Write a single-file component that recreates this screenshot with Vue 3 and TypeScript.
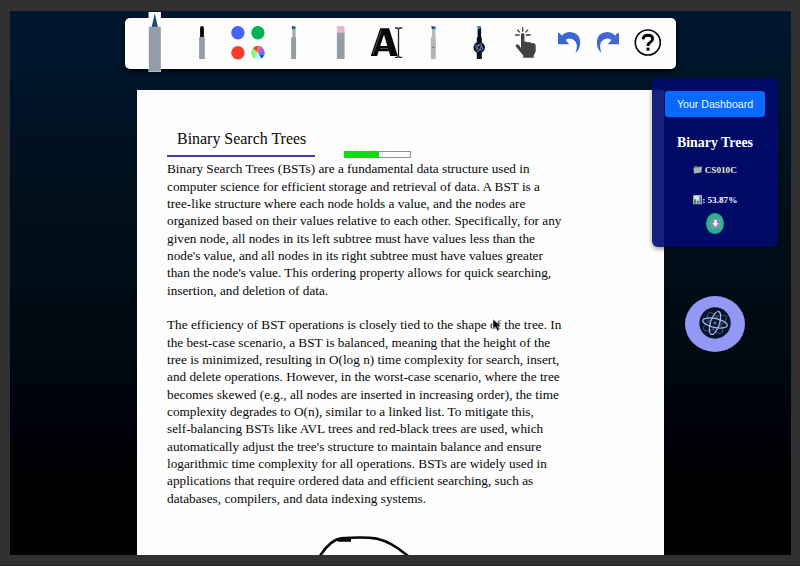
<script setup lang="ts">
const intro: string[] = [
  'Binary Search Trees (BSTs) are a fundamental data structure used in',
  'computer science for efficient storage and retrieval of data. A BST is a',
  'tree-like structure where each node holds a value, and the nodes are',
  'organized based on their values relative to each other. Specifically, for any',
  'given node, all nodes in its left subtree must have values less than the',
  "node's value, and all nodes in its right subtree must have values greater",
  "than the node's value. This ordering property allows for quick searching,",
  'insertion, and deletion of data.',
]
const details: string[] = [
  'The efficiency of BST operations is closely tied to the shape of the tree. In',
  'the best-case scenario, a BST is balanced, meaning that the height of the',
  'tree is minimized, resulting in O(log n) time complexity for search, insert,',
  'and delete operations. However, in the worst-case scenario, where the tree',
  'becomes skewed (e.g., all nodes are inserted in increasing order), the time',
  'complexity degrades to O(n), similar to a linked list. To mitigate this,',
  'self-balancing BSTs like AVL trees and red-black trees are used, which',
  "automatically adjust the tree's structure to maintain balance and ensure",
  'logarithmic time complexity for all operations. BSTs are widely used in',
  'applications that require ordered data and efficient searching, such as',
  'databases, compilers, and data indexing systems.',
]
const progress: number = 53.87
</script>

<template>
  <div class="window">
    <main class="desk">
      <header class="toolbar">
        <svg class="tool" viewBox="0 0 46.4 51">
          <path d="M16.6 -6h12.3v60H16.6z" fill="#fff" />
          <path d="M22.8 -4.8l3.2 14h-6.4z" fill="#204a78" />
          <path d="M16.8 8.7h12v45h-12z" fill="#949ca7" />
        </svg>
        <svg class="tool" viewBox="0 0 46.4 51">
          <path d="M21.1 19V10q0-2 1.9-2t1.9 2v9z" fill="#050505" />
          <path d="M20.1 19h5.7v22h-5.7z" fill="#949ca7" />
        </svg>
        <svg class="tool" viewBox="0 0 46.4 51">
          <circle cx="12.9" cy="14.7" r="6.7" fill="#4865fa" />
          <circle cx="32.9" cy="14.7" r="6.7" fill="#04b154" />
          <circle cx="12.9" cy="34.7" r="6.7" fill="#fc3b2b" />
          <g transform="translate(32.9 34.7)">
            <circle r="6.7" fill="#8bed73" />
            <path d="M0 0L-4.7-4.7A6.7 6.7 0 0 1 2.6-6.2z" fill="#f04722" />
            <path d="M0 0L2.6-6.2A6.7 6.7 0 0 1 6.7 0z" fill="#bd54e8" />
            <path d="M0 0H6.7A6.7 6.7 0 0 1 3.3 5.8z" fill="#244fe0" />
            <path d="M0 0L3.3 5.8A6.7 6.7 0 0 1-3.3 5.8z" fill="#c9fbf6" />
            <path d="M-6 -1L6 2M-3 5L1-6" stroke="#eee" stroke-width=".5" />
          </g>
        </svg>
        <svg class="tool" viewBox="0 0 46.4 51">
          <path d="M20.5 8l4 .6v2.4l-3 .9z" fill="#24598e" />
          <path d="M21.3 11.5l3.4-1V20h-3.4z" fill="#a4acb4" />
          <path d="M20.1 19.5h5V41h-5z" fill="#949ca7" />
        </svg>
        <svg class="tool" viewBox="0 0 46.4 51">
          <path d="M18.9 8h7.7v7h-7.7z" fill="#edbcc5" />
          <path d="M20 10l4 3M24 9l2 5" stroke="#cc9de4" stroke-width=".8" />
          <path d="M18.9 14.7h7.7V41h-7.7z" fill="#949ca7" />
        </svg>
        <svg class="tool" viewBox="0 0 46.4 51">
          <path fill-rule="evenodd" d="M6.7 38L16.2 10.3h8.9L33.8 38H26.3l-1.4-4.8H14.6L13.2 38zM16.2 28h7.1l-3.3-11.3z" fill="#080808" />
          <path d="M9.2 36l8-23.5M24 30.6h-8" stroke="#5a5a5a" stroke-width=".9" fill="none" />
          <path d="M30.9 10h2.2l1.3.8 1.3-.8h2.6M34.5 10.5v28M30.9 39.4h2.2l1.3-.8 1.3.8h2.6" stroke="#222" stroke-width="1.3" fill="none" />
        </svg>
        <svg class="tool" viewBox="0 0 46.4 51">
          <path d="M20.1 8l4.5.6v2.7l-3.3.9z" fill="#255e96" />
          <path d="M20.9 11.6l3.5-1V20h-3.5z" fill="#b7b8b8" />
          <path d="M19.8 19.5h5V41h-5z" fill="#b5b5b5" />
          <circle cx="22.4" cy="29.5" r=".8" fill="#555" />
        </svg>
        <svg class="tool" viewBox="0 0 46.4 51">
          <path d="M20.1 8l4 .6v3l-3.2.5z" fill="#2875ad" />
          <path d="M20.6 11.6l3.5-1v9h.7V41h-5V19.5h.8z" fill="#07101b" />
          <circle cx="22.2" cy="29.5" r="5.7" fill="#07162b" />
          <g fill="none" stroke="#a4bddb" stroke-width=".55">
            <ellipse cx="22.2" cy="29.5" rx="4.2" ry="1.7" transform="rotate(25 22.2 29.5)" />
            <ellipse cx="22.2" cy="29.5" rx="4.2" ry="1.7" transform="rotate(115 22.2 29.5)" />
          </g>
        </svg>
        <svg class="tool" viewBox="0 0 46.4 51">
          <path d="M18 30.5V16.7q0-1.7 1.7-1.7t1.7 1.7v7.1q2.3-1 3.5.6 2.3-.9 3.5.8 4.1-.6 4.3 2.6V33.5l-2 4V39.7H20.2V37.5l-7.2-8.8q-1-1.8.6-2.3 2.3-.6 4.4 4.1z" fill="#424242" />
          <path d="M19.7 9.2v4.5M14.3 11.8l2.6 2.6M25.1 11.8l-2.6 2.6M12 17h4.7M22.7 17h5" stroke="#424242" stroke-width="1.3" />
        </svg>
        <svg class="tool tool--undo" viewBox="0 0 38.5 51">
          <path d="M8 15.3l1.5-.2 2.5 2.6Q15 14.1 20 14.1 30.3 15 30.2 24.5 29.8 31.5 25.5 35 28.5 27 25.3 23.3 21 18.5 15.6 22l3.6 4.2H8z" fill="#3866d3" />
        </svg>
        <svg class="tool tool--redo" viewBox="0 0 41 51">
          <path d="M31 15.3l-1.5-.2-2.5 2.6Q24 14.1 19 14.1 8.7 15 8.8 24.5 9.2 31.5 13.5 35 10.5 27 13.7 23.3 18 18.5 23.4 22l-3.6 4.2H31z" fill="#4267d6" />
        </svg>
        <svg class="tool tool--help" viewBox="0 0 38.5 51">
          <circle cx="18.8" cy="24.5" r="12.5" fill="none" stroke="#050505" stroke-width="1.6" />
          <path d="M14.1 21.4q.1-4.2 4.8-4.2 4.7 0 4.7 3.6 0 2-2.3 3.4-2.3 1.3-2.3 3.8" fill="none" stroke="#050505" stroke-width="2.9" />
          <path d="M17.5 29.6h3v3h-3z" fill="#050505" />
        </svg>
      </header>

      <article class="page">
        <div class="heading-row">
          <h1>Binary Search Trees</h1>
          <div class="meter"><div class="fill" :style="{ width: progress + '%' }"></div><i class="thumb"></i></div>
        </div>
        <p><span v-for="line in intro" :key="line">{{ line }}</span></p>
        <p><span v-for="line in details" :key="line">{{ line }}</span></p>
        <svg class="sketch" viewBox="0 0 100 20">
          <path d="M4 20Q14 3.8 25 2.3Q48 .5 61 2.7Q75 5.5 92 20M22 4.4h13" fill="none" stroke="#050505" stroke-width="2.7" />
        </svg>
      </article>

      <aside class="card">
        <button type="button">Your Dashboard</button>
        <h2>Binary Trees</h2>
        <div class="course">
          <svg viewBox="0 0 10 10">
            <path d="M.8 1.5l3-.5 1 1 4.5-.5v6L1.5 9z" fill="#68717a" />
            <path d="M.5 3.2l8.8-1.4-1 6.1L1 9z" fill="#a9b0b2" />
          </svg>
          <span>CS010C</span>
        </div>
        <div class="score">
          <svg viewBox="0 0 10 10">
            <path d="M.3.3h9.2v9.4H.3z" fill="#d9e4e9" />
            <path d="M1 4.6h2.3v4.7H1z" fill="#16a259" />
            <path d="M4 6h2v3.3H4z" fill="#df3544" />
            <path d="M6.7 1.5h2.2v7.8H6.7z" fill="#287dbf" />
          </svg>
          <span>: {{ progress }}%</span>
        </div>
        <div class="download">
          <svg viewBox="0 0 11 11">
            <rect x=".2" y=".2" width="10.6" height="10.6" rx="1" fill="#7795ab" />
            <path d="M4.3 2h2.4v3.2h2L5.5 8.7 2.3 5.2h2z" fill="#fff" />
          </svg>
        </div>
      </aside>

      <div class="assistant">
        <svg viewBox="0 0 32 32">
          <circle cx="16" cy="16" r="15.7" fill="#061329" />
          <g fill="none" stroke="#40536f" stroke-width="1">
            <ellipse cx="16" cy="16" rx="13" ry="5" transform="rotate(-30 16 16)" />
            <ellipse cx="16" cy="16" rx="12" ry="5" transform="rotate(58 16 16)" />
          </g>
          <g fill="none" stroke="#a9b7f1" stroke-width="1.2">
            <ellipse cx="16" cy="16" rx="12.5" ry="4.4" transform="rotate(12 16 16)" />
            <ellipse cx="16" cy="16" rx="12" ry="4.5" transform="rotate(108 16 16)" />
          </g>
          <circle cx="16" cy="16" r="1.6" fill="#3a7db4" />
        </svg>
      </div>

      <svg class="cursor" viewBox="0 0 10 15">
        <path d="M1 1v10l2.5-2.2L5.3 13l2-1-1.7-3.8H9z" fill="#080808" stroke="#fff" stroke-width=".5" />
      </svg>
    </main>
  </div>
</template>

<style>
body { margin: 0; background: #303030; overflow: hidden; }
</style>

<style scoped>
.window {
  box-sizing: border-box;
  width: 800px;
  height: 566px;
  padding: 11px 9px 11px 9.5px;
  background: #303030;
  border-bottom: 1px solid #222;
}
.desk {
  position: relative;
  box-sizing: border-box;
  height: 543.5px;
  padding: 7px 0 0;
  overflow: hidden;
  background: linear-gradient(#001730 0, #00111e 30%, #000a12 60%, #000007 80%, #000 90%);
}
.toolbar {
  box-sizing: border-box;
  display: flex;
  width: 551.5px;
  height: 51px;
  margin-left: 115px;
  padding-left: 7.8px;
  border-radius: 5px;
  background: #fdfdfd;
  box-shadow: 0 2px 5px #000;
}
.tool { flex: none; width: 46.4px; height: 51px; overflow: visible; }
.tool--undo { width: 38.5px; }
.tool--redo { width: 41px; }
.tool--help { width: 38.5px; }
.page {
  box-sizing: border-box;
  width: 526.5px;
  height: 465px;
  margin: 21px 0 0 127.5px;
  padding: 36px 0 0 30px;
  overflow: hidden;
  background: #fdfdfd;
  color: #080808;
  font: 13.25px/17.35px "Liberation Serif", serif;
}
.heading-row { display: flex; align-items: flex-end; gap: 29.5px; height: 34.3px; }
h1 {
  box-sizing: border-box;
  width: 147.5px;
  height: 31px;
  margin: 0 0 3.3px;
  padding: 3px 0 0 10px;
  border-bottom: 2px solid #4b3aa6;
  font-size: 15.95px;
  font-weight: 400;
  line-height: 20px;
  white-space: nowrap;
}
.meter { display: flex; box-sizing: border-box; width: 67px; height: 7px; margin-bottom: 2.3px; border: 1px solid #929292; background: #fff; }
.fill { flex: none; margin: -1px 0 -1px -1px; background: #16d716; }
.thumb { width: 4px; background: #e3edf8; }
p { margin: 0 0 17.35px; }
p span { display: block; height: 17.35px; white-space: nowrap; }
.sketch { display: block; width: 100px; height: 20px; margin: 29px 0 0 149px; }
.card {
  position: absolute;
  top: 67px;
  left: 642.5px;
  box-sizing: border-box;
  display: flex;
  flex-direction: column;
  align-items: center;
  width: 126px;
  height: 169px;
  padding-top: 13px;
  border-radius: 6px;
  background: rgba(0, 10, 110, .91);
  box-shadow: 0 2px 4px #0006;
  color: #fff;
  font-family: "Liberation Serif", serif;
}
button {
  width: 100px;
  height: 26px;
  padding: 0;
  border: 0;
  border-radius: 3px;
  background: #0769ff;
  color: #f3f8ff;
  font: 10.6px "Liberation Sans", sans-serif;
}
h2 { margin: 18px 0 0; font-size: 13.9px; line-height: 16px; }
.course, .score { display: flex; align-items: center; gap: 2px; height: 12px; font-size: 9.2px; font-weight: 700; }
.course { margin-top: 12.5px; color: #e6edca; }
.score { gap: 0; margin-top: 18.5px; }
.course svg, .score svg { width: 9.5px; height: 9.5px; }
.download { display: flex; align-items: center; justify-content: center; width: 18px; height: 21px; margin-top: 7px; border-radius: 50%; background: #25b486; }
.download svg { width: 11px; height: 11px; }
.assistant {
  position: absolute;
  top: 285px;
  left: 675.5px;
  display: flex;
  align-items: center;
  justify-content: center;
  width: 60px;
  height: 56px;
  border-radius: 50%;
  background: #9298f4;
}
.assistant svg { width: 32px; height: 32px; margin-top: -3px; }
.cursor { position: absolute; top: 307px; left: 482px; width: 10px; height: 15px; }
</style>
